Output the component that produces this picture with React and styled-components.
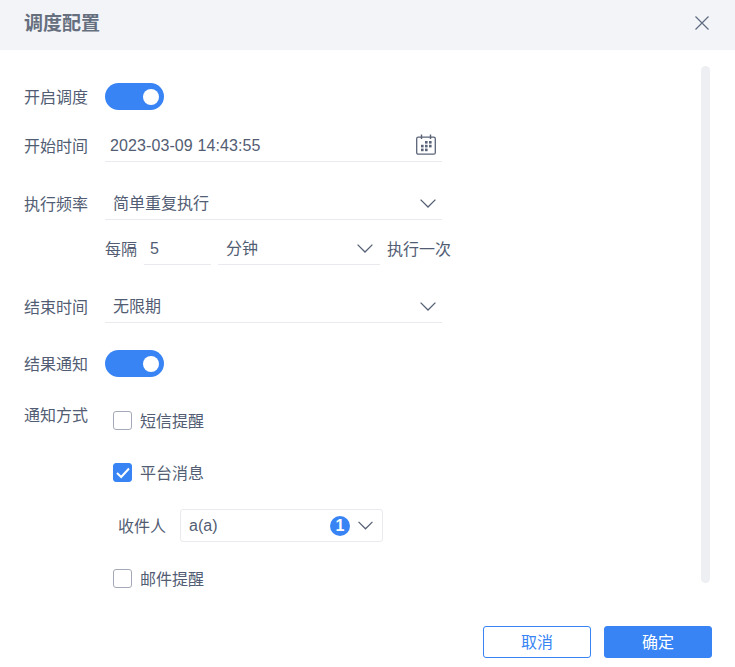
import React from "react";
import styled, { createGlobalStyle } from "styled-components";

const Global = createGlobalStyle`
  html, body { margin: 0; padding: 0; background: #fff; }
  * { box-sizing: border-box; }
  body { font-family: "Liberation Sans", "Noto Sans CJK SC", sans-serif; font-size: 16px; color: #525d73; }
`;

const Dialog = styled.div`
  width: 735px; height: 667px; display: flex; flex-direction: column; background: #fff; overflow: hidden;
`;
const Header = styled.header`
  height: 50px; flex: none; background: #f2f4f8; display: flex; align-items: center; justify-content: space-between;
  padding: 0 25px 3px 24px;
`;
const Title = styled.h1`
  margin: 0; font-size: 19px; line-height: 24px; font-weight: 700; color: #666f7e;
`;
const CloseIcon = styled.svg`
  width: 16px; height: 16px; display: block; color: #5f6b80; margin-top: -2px;
`;
const Body = styled.main`
  position: relative; flex: 1; min-height: 0; padding: 33px 0 0 24px; overflow: hidden;
`;
const Scrollbar = styled.div`
  position: absolute; left: 701px; top: 16px; width: 9px; height: 517px; border-radius: 5px; background: #eeeff2;
`;
const Row = styled.div`
  display: flex; align-items: ${p => p.$align || "center"}; height: ${p => p.$h || 32}px; margin-top: ${p => p.$mt || 0}px;
`;
const Label = styled.span`
  flex: none; width: 81px; line-height: 22px; font-size: 16px; color: #525d73; padding-top: 2px;
`;
const Toggle = styled.div`
  width: 59px; height: 27px; border-radius: 14px; background: #3884f4; display: flex; align-items: center; justify-content: flex-end; padding-right: 5px;
`;
const Knob = styled.span`
  width: 16px; height: 16px; border-radius: 50%; background: #fff;
`;
const Field = styled.div`
  width: ${p => p.$w || 337}px; height: 32px; flex: none; display: flex; align-items: center; justify-content: space-between;
  border-bottom: 1px solid #e8eaee; padding: 0 ${p => p.$pr ?? 6}px 0 ${p => p.$pl ?? 8}px;
  font-size: 16px; color: #525d73; line-height: 22px;
`;
const DateText = styled.span`
  letter-spacing: 0.1px;
`;
const ChevronSvg = styled.svg`
  display: block; flex: none; color: #566074;
`;
const Chevron = ({ w = 16 }) => (
  <ChevronSvg width={w} height="9" viewBox="0 0 16 9" fill="none">
    <path d="M0.6 0.6 L8 8 L15.4 0.6" stroke="currentColor" strokeWidth="1.3" />
  </ChevronSvg>
);
const CalendarSvg = styled.svg`
  display: block; flex: none; color: #5a6478; margin-bottom: 2px;
`;
const Plain = styled.span`
  flex: none; font-size: 16px; line-height: 22px; color: #525d73; padding-top: 2px;
`;
const IntervalLabel = styled(Plain)`
  width: 39px;
`;
const AfterLabel = styled(Plain)`
  margin-left: 7px;
`;
const Spacer = styled.span`
  width: ${p => p.$w}px; flex: none;
`;
const Notify = styled.section`
  display: flex; margin-top: 28px;
`;
const NotifyLabel = styled(Label)`
  margin-top: -2px;
`;
const Options = styled.div`
  display: flex; flex-direction: column; padding-left: 8px;
`;
const CheckRow = styled.label`
  display: flex; align-items: center; gap: 8px; height: 19px; margin-top: ${p => p.$mt || 0}px; font-size: 16px; color: #525d73; line-height: 22px;
`;
const CheckText = styled.span`
  padding-top: 2px;
`;
const Box = styled.span`
  width: 19px; height: 19px; flex: none; border-radius: 3px; display: flex; align-items: center; justify-content: center;
  background: ${p => p.$on ? "#3884f4" : "#fff"}; border: 1px solid ${p => p.$on ? "#3884f4" : "#a3a9b6"};
`;
const Recipient = styled.div`
  display: flex; align-items: center; margin: 27px 0 27px 5px; height: 33px;
`;
const RecipientLabel = styled(Plain)`
  width: 62px;
`;
const Select = styled.div`
  width: 203px; height: 33px; border: 1px solid #e8eaee; border-radius: 3px; display: flex; align-items: center; padding: 0 9px 0 8px; font-size: 16px; color: #525d73;
`;
const SelectText = styled.span`
  flex: 1;
`;
const Badge = styled.span`
  width: 20px; height: 20px; border-radius: 50%; background: #3884f4; color: #fff; display: flex; align-items: center; justify-content: center;
  font-size: 16px; font-weight: 700; margin: 0 8px 0 0;
`;
const Footer = styled.footer`
  flex: none; display: flex; justify-content: flex-end; gap: 13px; padding: 16px 23px 9px 0; height: 57px;
`;
const Button = styled.button`
  width: 108px; height: 32px; border-radius: 3px; border: 1px solid #3884f4; padding: 0 0 2px; font: inherit; font-size: 16px;
  background: ${p => p.$primary ? "#3884f4" : "#fff"}; color: ${p => p.$primary ? "#fff" : "#3884f4"};
`;

export default function App() {
  return (
    <>
      <Global />
      <Dialog>
        <Header>
          <Title>调度配置</Title>
          <CloseIcon viewBox="0 0 16 16" fill="none">
            <path d="M1.5 1.5 L14.5 14.5 M14.5 1.5 L1.5 14.5" stroke="currentColor" strokeWidth="1.2" />
          </CloseIcon>
        </Header>
        <Body>
          <Scrollbar />
          <Row $h={27}>
            <Label>开启调度</Label>
            <Toggle><Knob /></Toggle>
          </Row>
          <Row $mt={20}>
            <Label>开始时间</Label>
            <Field $pl={5}>
              <DateText>2023-03-09 14:43:55</DateText>
              <CalendarSvg width="20" height="21" viewBox="0 0 20 21" fill="none">
                <rect x="0.7" y="3.2" width="18.6" height="17" rx="1.5" stroke="currentColor" strokeWidth="1.3" />
                <path d="M5.5 0.5 V5 M14.5 0.5 V5" stroke="currentColor" strokeWidth="1.4" />
                <g fill="currentColor">
                  <rect x="9" y="7" width="2.6" height="2.6" />
                  <rect x="13" y="7" width="2.6" height="2.6" />
                  <rect x="5" y="10.8" width="2.6" height="2.6" />
                  <rect x="9" y="10.8" width="2.6" height="2.6" />
                  <rect x="13" y="10.8" width="2.6" height="2.6" />
                  <rect x="5" y="14.6" width="2.6" height="2.6" />
                  <rect x="9" y="14.6" width="2.6" height="2.6" />
                </g>
              </CalendarSvg>
            </Field>
          </Row>
          <Row $mt={26}>
            <Label>执行频率</Label>
            <Field>
              <span>简单重复执行</span>
              <Chevron />
            </Field>
          </Row>
          <Row $mt={13}>
            <Spacer $w={81} />
            <IntervalLabel>每隔</IntervalLabel>
            <Field $w={67} $pl={6} $pr={0}>
              <span>5</span>
            </Field>
            <Spacer $w={7} />
            <Field $w={162} $pl={8} $pr={7}>
              <span>分钟</span>
              <Chevron />
            </Field>
            <AfterLabel>执行一次</AfterLabel>
          </Row>
          <Row $mt={26}>
            <Label>结束时间</Label>
            <Field>
              <span>无限期</span>
              <Chevron />
            </Field>
          </Row>
          <Row $h={27} $mt={27}>
            <Label>结果通知</Label>
            <Toggle><Knob /></Toggle>
          </Row>
          <Notify>
            <NotifyLabel>通知方式</NotifyLabel>
            <Options>
              <CheckRow $mt={6}>
                <Box />
                <CheckText>短信提醒</CheckText>
              </CheckRow>
              <CheckRow $mt={33}>
                <Box $on>
                  <svg width="14" height="12" viewBox="0 0 14 12" fill="none">
                    <path d="M1 6 L5.2 10 L13 1.5" stroke="#fff" strokeWidth="2" />
                  </svg>
                </Box>
                <CheckText>平台消息</CheckText>
              </CheckRow>
              <Recipient>
                <RecipientLabel>收件人</RecipientLabel>
                <Select>
                  <SelectText>a(a)</SelectText>
                  <Badge>1</Badge>
                  <Chevron w={15} />
                </Select>
              </Recipient>
              <CheckRow>
                <Box />
                <CheckText>邮件提醒</CheckText>
              </CheckRow>
            </Options>
          </Notify>
        </Body>
        <Footer>
          <Button>取消</Button>
          <Button $primary>确定</Button>
        </Footer>
      </Dialog>
    </>
  );
}
